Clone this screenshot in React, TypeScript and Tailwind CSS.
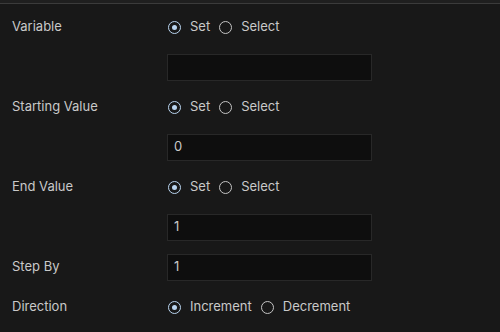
type Opt = { label: string; checked: boolean }

function Radio({ label, checked }: Opt) {
  return (
    <label className="flex items-center gap-[9px]">
      <span
        className={[
          'flex h-[13px] w-[13px] items-center justify-center rounded-full border',
          checked ? 'border-[#b9d4ef]' : 'border-[#c4c4c4]',
        ].join(' ')}
      >
        {checked && <span className="h-[5px] w-[5px] rounded-full bg-[#b9d4ef]" />}
      </span>
      <span>{label}</span>
    </label>
  )
}

function RadioGroup({ options }: { options: Opt[] }) {
  return (
    <div className="ml-px flex items-center gap-[9px]">
      {options.map((o) => (
        <Radio key={o.label} {...o} />
      ))}
    </div>
  )
}

function Input({ value }: { value: string }) {
  return (
    <div className="flex h-[27px] w-[205px] items-center border border-[#282828] bg-[#0e0e0e] px-[6px]">
      {value}
    </div>
  )
}

function Row({ label, children }: { label?: string; children: React.ReactNode }) {
  return (
    <div className="flex h-10 items-center">
      <div className="w-[155px] shrink-0">{label}</div>
      {children}
    </div>
  )
}

const setSelect: Opt[] = [
  { label: 'Set', checked: true },
  { label: 'Select', checked: false },
]

export default function App() {
  return (
    <div
      className="flex h-[332px] w-[500px] flex-col bg-[#181818] text-[13px] text-[#c9c9c9]"
      style={{ fontFamily: 'Inter, "Liberation Sans", sans-serif' }}
    >
      <div className="h-[3px] bg-[#1f1f1f]" />
      <div className="h-px bg-[#3b3b3b]" />
      <div className="flex flex-col pl-3 pt-[3px]">
        <Row label="Variable">
          <RadioGroup options={setSelect} />
        </Row>
        <Row>
          <Input value="" />
        </Row>
        <Row label="Starting Value">
          <RadioGroup options={setSelect} />
        </Row>
        <Row>
          <Input value="0" />
        </Row>
        <Row label="End Value">
          <RadioGroup options={setSelect} />
        </Row>
        <Row>
          <Input value="1" />
        </Row>
        <Row label="Step By">
          <Input value="1" />
        </Row>
        <Row label="Direction">
          <RadioGroup
            options={[
              { label: 'Increment', checked: true },
              { label: 'Decrement', checked: false },
            ]}
          />
        </Row>
      </div>
    </div>
  )
}
